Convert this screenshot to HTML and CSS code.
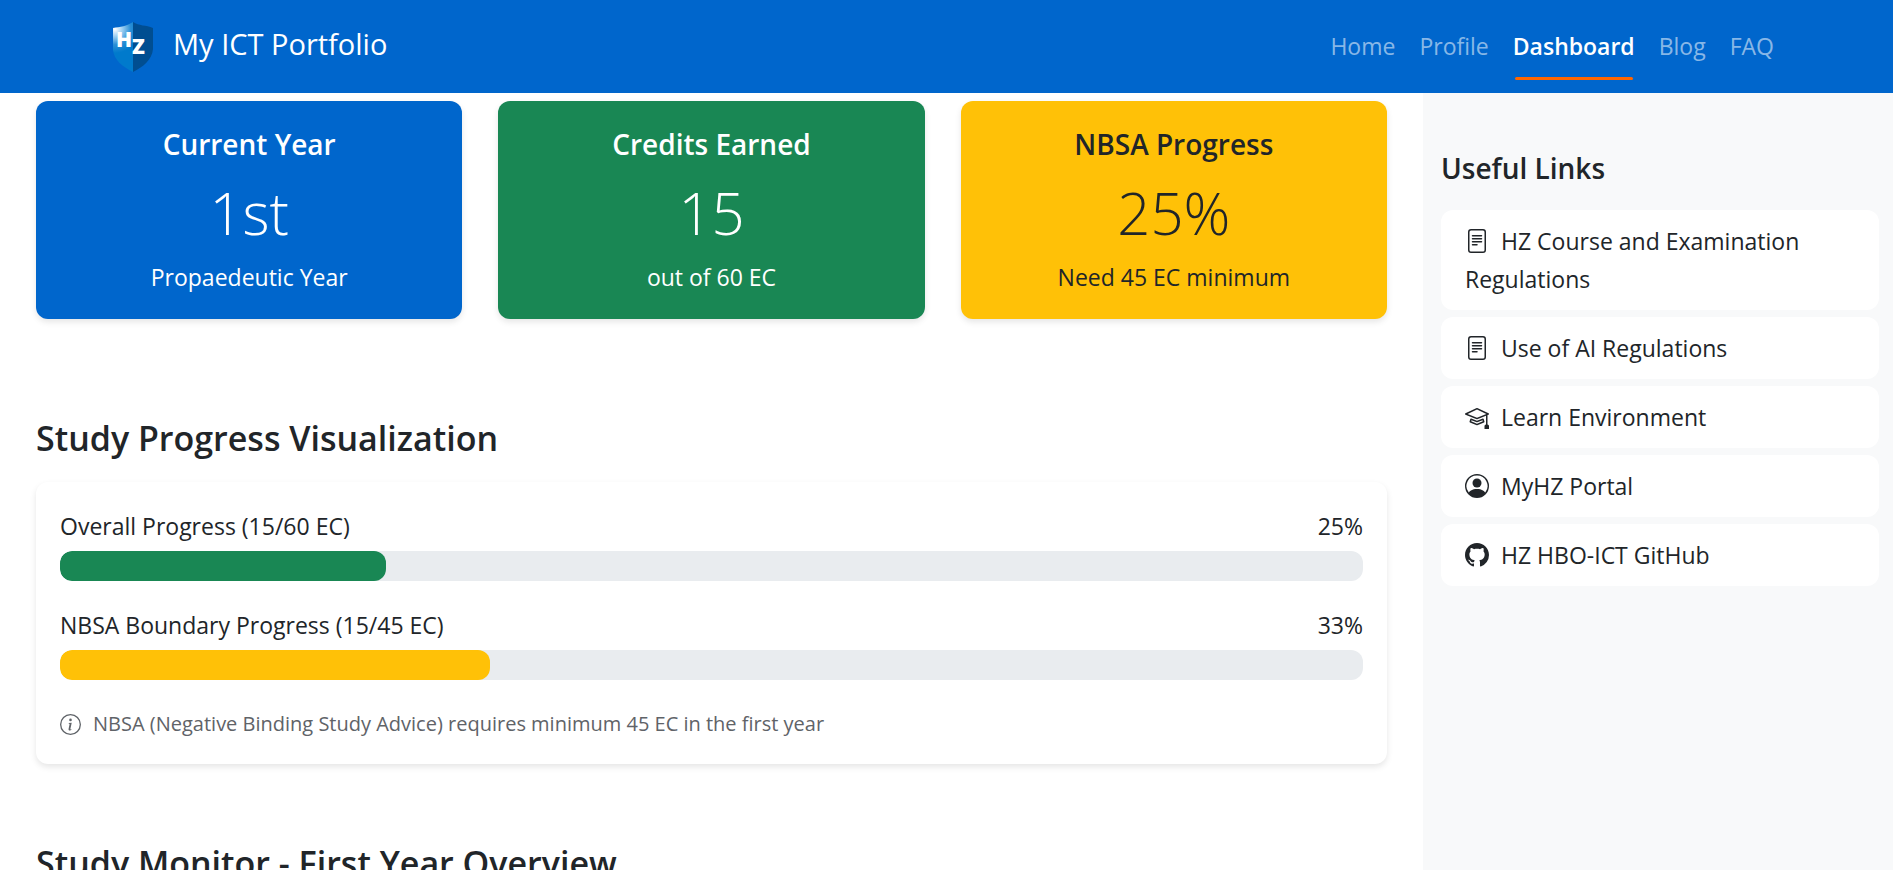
FILE: index.html
```html
<!DOCTYPE html>
<html lang="en">
<head>
<meta charset="utf-8">
<meta name="viewport" content="width=device-width, initial-scale=1">
<title>My ICT Portfolio - Dashboard</title>
<link rel="stylesheet" href="styles.css">
</head>
<body>
<header class="navbar">
  <a class="brand" href="#">
    <svg class="brand-logo" viewBox="0 0 52 60" role="img" aria-label="HZ logo">
      <defs>
        <radialGradient id="shine" gradientUnits="userSpaceOnUse" cx="8" cy="12" r="24">
          <stop offset="0" stop-color="#ffffff"/>
          <stop offset="0.3" stop-color="#9fd0f2"/>
          <stop offset="0.65" stop-color="#2a8fd6"/>
          <stop offset="1" stop-color="#007acc"/>
        </radialGradient>
      </defs>
      <path fill="url(#shine)" d="M26 5C20 9 13 10 6 11V33C7 43 16 50 26 55Z"/>
      <path fill="#004e91" d="M26 5C32 9 39 8 46 11V32C45 43 36 50 26 55Z"/>
      <text class="logo-letter" x="9" y="30" font-size="21">H</text>
      <text class="logo-letter" x="25" y="37" font-size="21">Z</text>
    </svg>
    <span class="brand-name">My ICT Portfolio</span>
  </a>
  <nav class="nav" aria-label="Main">
    <a href="#">Home</a>
    <a href="#">Profile</a>
    <a class="active" href="#" aria-current="page">Dashboard</a>
    <a href="#">Blog</a>
    <a href="#">FAQ</a>
  </nav>
</header>

<div class="layout">
  <main class="content">
    <section class="stats" aria-label="Summary">
      <article class="stat stat-year">
        <h3>Current Year</h3>
        <p class="figure">1st</p>
        <p>Propaedeutic Year</p>
      </article>
      <article class="stat stat-credits">
        <h3>Credits Earned</h3>
        <p class="figure">15</p>
        <p>out of 60 EC</p>
      </article>
      <article class="stat stat-nbsa">
        <h3>NBSA Progress</h3>
        <p class="figure">25%</p>
        <p>Need 45 EC minimum</p>
      </article>
    </section>

    <section class="block">
      <h2>Study Progress Visualization</h2>
      <div class="panel">
        <div class="meter">
          <div class="meter-head"><span id="overall">Overall Progress (15/60 EC)</span><span>25%</span></div>
          <div class="track" role="progressbar" aria-labelledby="overall" aria-valuenow="25" aria-valuemin="0" aria-valuemax="100">
            <div class="fill fill-green" style="width: 25%"></div>
          </div>
        </div>
        <div class="meter">
          <div class="meter-head"><span id="boundary">NBSA Boundary Progress (15/45 EC)</span><span>33%</span></div>
          <div class="track" role="progressbar" aria-labelledby="boundary" aria-valuenow="33" aria-valuemin="0" aria-valuemax="100">
            <div class="fill fill-yellow" style="width: 33%"></div>
          </div>
        </div>
        <p class="note">
          <svg class="note-icon" viewBox="0 0 16 16" aria-hidden="true"><path d="M8 15A7 7 0 1 1 8 1a7 7 0 0 1 0 14m0 1A8 8 0 1 0 8 0a8 8 0 0 0 0 16"/><path d="m8.930 6.588-2.290.287-.082.380.450.083c.294.070.352.176.288.469l-.738 3.468c-.194.897.105 1.319.808 1.319.545 0 1.178-.252 1.465-.598l.088-.416c-.200.176-.492.246-.686.246-.275 0-.375-.193-.304-.533zM9 4.500a1 1 0 1 1-2 0 1 1 0 0 1 2 0"/></svg>
          <span>NBSA (Negative Binding Study Advice) requires minimum 45 EC in the first year</span>
        </p>
      </div>
    </section>

    <section class="block">
      <h2>Study Monitor - First Year Overview</h2>
    </section>
  </main>

  <aside class="sidebar">
    <h3>Useful Links</h3>
    <ul class="links">
      <li><a href="#"><svg viewBox="0 0 16 16" aria-hidden="true"><path d="M5 4a.5.5 0 0 0 0 1h6a.5.5 0 0 0 0-1zm-.5 2.500A.5.5 0 0 1 5 6h6a.5.5 0 0 1 0 1H5a.5.5 0 0 1-.5-.5M5 8a.5.5 0 0 0 0 1h6a.5.5 0 0 0 0-1zm0 2a.5.5 0 0 0 0 1h3a.5.5 0 0 0 0-1z"/><path d="M2 2a2 2 0 0 1 2-2h8a2 2 0 0 1 2 2v12a2 2 0 0 1-2 2H4a2 2 0 0 1-2-2zm10-1H4a1 1 0 0 0-1 1v12a1 1 0 0 0 1 1h8a1 1 0 0 0 1-1V2a1 1 0 0 0-1-1"/></svg>HZ Course and Examination Regulations</a></li>
      <li><a href="#"><svg viewBox="0 0 16 16" aria-hidden="true"><path d="M5 4a.5.5 0 0 0 0 1h6a.5.5 0 0 0 0-1zm-.5 2.500A.5.5 0 0 1 5 6h6a.5.5 0 0 1 0 1H5a.5.5 0 0 1-.5-.5M5 8a.5.5 0 0 0 0 1h6a.5.5 0 0 0 0-1zm0 2a.5.5 0 0 0 0 1h3a.5.5 0 0 0 0-1z"/><path d="M2 2a2 2 0 0 1 2-2h8a2 2 0 0 1 2 2v12a2 2 0 0 1-2 2H4a2 2 0 0 1-2-2zm10-1H4a1 1 0 0 0-1 1v12a1 1 0 0 0 1 1h8a1 1 0 0 0 1-1V2a1 1 0 0 0-1-1"/></svg>Use of AI Regulations</a></li>
      <li><a href="#"><svg viewBox="0 0 16 16" aria-hidden="true"><path d="M8.211 2.047a.5.5 0 0 0-.422 0l-7.500 3.500a.5.5 0 0 0 .025.917l7.500 3a.5.5 0 0 0 .372 0L14 7.140V13a1 1 0 0 0-1 1v2h3v-2a1 1 0 0 0-1-1V6.739l.686-.275a.5.5 0 0 0 .025-.917zM8 8.460 1.758 5.965 8 3.052l6.242 2.913z"/><path d="M4.176 9.032a.5.5 0 0 0-.656.327l-.5 1.700a.5.5 0 0 0 .294.605l4.500 1.800a.5.5 0 0 0 .372 0l4.500-1.800a.5.5 0 0 0 .294-.605l-.5-1.700a.5.5 0 0 0-.656-.327L8 10.466zm-.068 1.873.220-.748 3.496 1.311a.5.5 0 0 0 .352 0l3.496-1.311.220.748L8 12.460z"/></svg>Learn Environment</a></li>
      <li><a href="#"><svg viewBox="0 0 16 16" aria-hidden="true"><path d="M11 6a3 3 0 1 1-6 0 3 3 0 0 1 6 0"/><path fill-rule="evenodd" d="M0 8a8 8 0 1 1 16 0A8 8 0 0 1 0 8m8-7a7 7 0 0 0-5.468 11.370C3.242 11.226 4.805 10 8 10s4.757 1.225 5.468 2.370A7 7 0 0 0 8 1"/></svg>MyHZ Portal</a></li>
      <li><a href="#"><svg viewBox="0 0 16 16" aria-hidden="true"><path d="M8 0C3.580 0 0 3.580 0 8c0 3.540 2.290 6.530 5.470 7.590.4.070.55-.17.55-.38 0-.19-.01-.82-.01-1.490-2.010.37-2.530-.49-2.690-.94-.09-.23-.48-.94-.82-1.130-.28-.15-.68-.52-.01-.53.63-.01 1.080.58 1.230.82.72 1.210 1.870.87 2.330.66.07-.52.28-.87.51-1.070-1.780-.2-3.640-.89-3.640-3.950 0-.87.31-1.590.82-2.150-.08-.2-.36-1.020.08-2.120 0 0 .67-.21 2.200.82.64-.18 1.320-.27 2-.27s1.360.09 2 .27c1.530-1.040 2.200-.82 2.200-.82.44 1.100.16 1.920.08 2.120.51.56.82 1.270.82 2.150 0 3.070-1.870 3.750-3.650 3.950.29.25.54.73.54 1.480 0 1.070-.01 1.930-.01 2.200 0 .21.15.46.55.38A8.010 8.010 0 0 0 16 8c0-4.420-3.580-8-8-8"/></svg>HZ HBO-ICT GitHub</a></li>
    </ul>
  </aside>
</div>
</body>
</html>
```

FILE: styles.css
```css
* {
  box-sizing: border-box;
}

body {
  margin: 0;
  background: #fff;
  color: #212529;
  font-family: "Open Sans", "Noto Sans", sans-serif;
  font-size: 23px;
  line-height: 36px;
}

h2,
h3,
p,
ul {
  margin: 0;
}

a {
  color: inherit;
  text-decoration: none;
}

.navbar {
  display: flex;
  align-items: center;
  justify-content: space-between;
  min-height: 93px;
  padding: 0 107px;
  background: #0066cc;
  color: #fff;
}

.brand {
  display: flex;
  align-items: center;
  gap: 14px;
  font-size: 29px;
}

.brand-logo {
  width: 52px;
  height: 60px;
}

.brand-name {
  padding-bottom: 6px;
}

.logo-letter {
  fill: #fff;
  font-family: "Open Sans", sans-serif;
  font-weight: 800;
}

.nav {
  display: flex;
}

.nav a {
  position: relative;
  padding: 12px 12px 13px;
  color: rgba(255, 255, 255, 0.55);
}

.nav .active {
  color: #fff;
  font-weight: 600;
}

.nav .active::after {
  content: "";
  position: absolute;
  right: 14px;
  bottom: -3px;
  left: 14px;
  height: 3px;
  border-radius: 2px;
  background: #ff6600;
}

.layout {
  display: grid;
  grid-template-columns: 1423fr 470fr;
}

.content {
  padding: 8px 36px 0;
}

.stats {
  display: grid;
  grid-template-columns: repeat(3, 1fr);
  gap: 36px;
}

.stat {
  padding: 24px;
  border-radius: 12px;
  box-shadow: 0 3px 6px rgba(0, 0, 0, 0.1);
  text-align: center;
}

.stat h3 {
  margin-bottom: 14px;
  font-size: 28px;
  font-weight: 600;
  line-height: 38px;
}

.stat .figure {
  margin-bottom: 10px;
  font-size: 58px;
  font-weight: 300;
  line-height: 72px;
}

.stat-year {
  background: #0066cc;
  color: #fff;
}

.stat-credits {
  background: #198754;
  color: #fff;
}

.stat-nbsa {
  background: #ffc107;
}

.block {
  padding-top: 96px;
}

.block + .block {
  padding-top: 76px;
}

.block h2 {
  margin-bottom: 21px;
  font-size: 34px;
  font-weight: 600;
  line-height: 46px;
}

.panel {
  display: flex;
  flex-direction: column;
  gap: 24px;
  padding: 24px 24px 20px;
  border-radius: 12px;
  box-shadow: 0 3px 6px rgba(0, 0, 0, 0.1);
}

.meter-head {
  display: flex;
  justify-content: space-between;
  margin-bottom: 5px;
  line-height: 40px;
}

.track {
  height: 30px;
  overflow: hidden;
  border-radius: 12px;
  background: #e9ecef;
}

.fill {
  height: 100%;
  border-radius: 12px;
}

.fill-green {
  background: #198754;
}

.fill-yellow {
  background: #ffc107;
}

.note {
  display: flex;
  align-items: center;
  gap: 12px;
  color: #5f6368;
  font-size: 20px;
  line-height: 40px;
}

.note-icon {
  width: 21px;
  height: 21px;
  fill: currentColor;
}

.sidebar {
  padding: 57px 14px 0 18px;
  background: #f8f9fa;
}

.sidebar h3 {
  margin-bottom: 24px;
  font-size: 28px;
  font-weight: 600;
}

.links {
  display: flex;
  flex-direction: column;
  gap: 7px;
  padding: 0;
  list-style: none;
}

.links a {
  display: block;
  padding: 12px 24px;
  border-radius: 12px;
  background: #fff;
  line-height: 38px;
}

.links svg {
  width: 24px;
  height: 24px;
  margin-right: 12px;
  fill: currentColor;
  vertical-align: -3px;
}
```
